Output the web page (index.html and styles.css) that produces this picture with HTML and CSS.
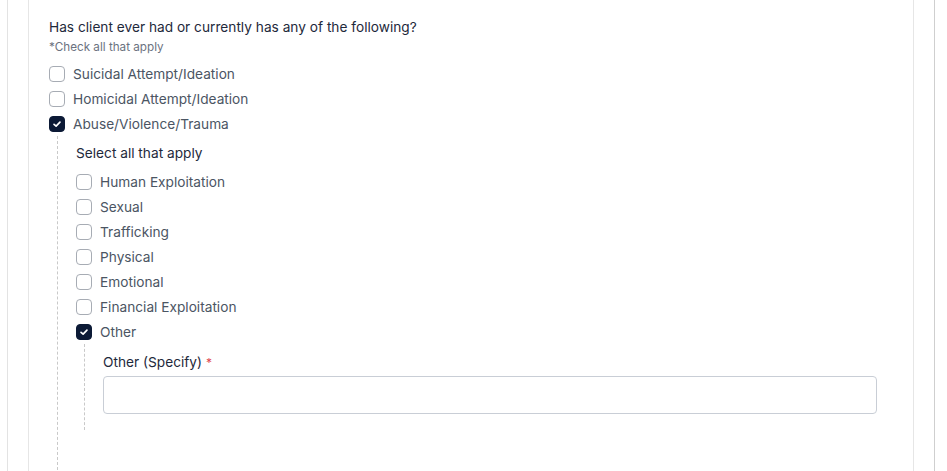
FILE: index.html
```html
<!DOCTYPE html>
<html lang="en">
<head>
<meta charset="utf-8">
<title>Form</title>
<link rel="stylesheet" href="styles.css">
</head>
<body>
<div class="page">
  <div class="outer">
    <div class="card">
      <div class="question">Has client ever had or currently has any of the following?</div>
      <div class="hint">*Check all that apply</div>
      <label class="row"><span class="box"></span><span class="text">Suicidal Attempt/Ideation</span></label>
      <label class="row"><span class="box"></span><span class="text">Homicidal Attempt/Ideation</span></label>
      <label class="row"><span class="box checked"><svg viewBox="0 0 16 16" width="16" height="16"><path d="M4.6 8.3 L7 10.5 L11.4 5.8" fill="none" stroke="#fff" stroke-width="1.9" stroke-linecap="round" stroke-linejoin="round"/></svg></span><span class="text">Abuse/Violence/Trauma</span></label>
      <div class="nested">
        <div class="subq">Select all that apply</div>
        <label class="row"><span class="box"></span><span class="text">Human Exploitation</span></label>
        <label class="row"><span class="box"></span><span class="text">Sexual</span></label>
        <label class="row"><span class="box"></span><span class="text">Trafficking</span></label>
        <label class="row"><span class="box"></span><span class="text">Physical</span></label>
        <label class="row"><span class="box"></span><span class="text">Emotional</span></label>
        <label class="row"><span class="box"></span><span class="text">Financial Exploitation</span></label>
        <label class="row"><span class="box checked"><svg viewBox="0 0 16 16" width="16" height="16"><path d="M4.6 8.3 L7 10.5 L11.4 5.8" fill="none" stroke="#fff" stroke-width="1.9" stroke-linecap="round" stroke-linejoin="round"/></svg></span><span class="text">Other</span></label>
        <div class="nested inner">
          <div class="field-label">Other (Specify) <span class="req">*</span></div>
          <div class="input"></div>
        </div>
      </div>
    </div>
  </div>
</div>
</body>
</html>
```
FILE: styles.css
```css
html, body {
  margin: 0;
  padding: 0;
  background: #ffffff;
}
body {
  font-family: Inter, "Open Sans", "Liberation Sans", sans-serif;
  color: #1f2a3c;
}
.page {
  padding: 0 12px 0 7px;
  height: 471px;
  overflow: hidden;
}
.outer {
  border-left: 1px solid #e3e3e3;
  border-right: 1px solid #cfcfcf;
  padding: 0 20px;
  height: 100%;
}
.card {
  border-left: 1px solid #e6e6e6;
  border-right: 1px solid #e6e6e6;
  padding: 17px 20px 0;
  height: 100%;
  box-sizing: border-box;
}
.question {
  font-size: 13.7px;
  line-height: 20px;
  color: #1e293b;
}
.hint {
  font-size: 11.7px;
  line-height: 16px;
  color: #6b7280;
  margin-top: 2px;
  margin-bottom: 6px;
}
.row {
  display: flex;
  align-items: center;
  height: 25px;
  gap: 8px;
}
.box {
  width: 16px;
  height: 16px;
  box-sizing: border-box;
  border: 1.5px solid #a7acb4;
  border-radius: 4px;
  flex: none;
  display: flex;
  align-items: center;
  justify-content: center;
}
.box.checked {
  background: #0c1a36;
  border-color: #0c1a36;
}
.box svg {
  display: block;
}
.text {
  font-size: 13.7px;
  line-height: 20px;
  color: #4b5563;
}
.nested {
  margin-left: 8px;
  border-left: 1px dashed #c9c9c9;
  padding: 7px 8px 40px 18px;
}
.subq {
  font-size: 13.7px;
  line-height: 20px;
  color: #1e293b;
  margin-bottom: 6px;
}
.nested.inner {
  padding: 8px 8px 16px 18px;
}
.field-label {
  font-size: 13.7px;
  line-height: 20px;
  color: #1e293b;
}
.req {
  color: #e0464f;
  font-size: 12px;
}
.input {
  margin-top: 3px;
  height: 38px;
  box-sizing: border-box;
  border: 1px solid #c9ced6;
  border-radius: 4px;
  background: #fff;
}
```
